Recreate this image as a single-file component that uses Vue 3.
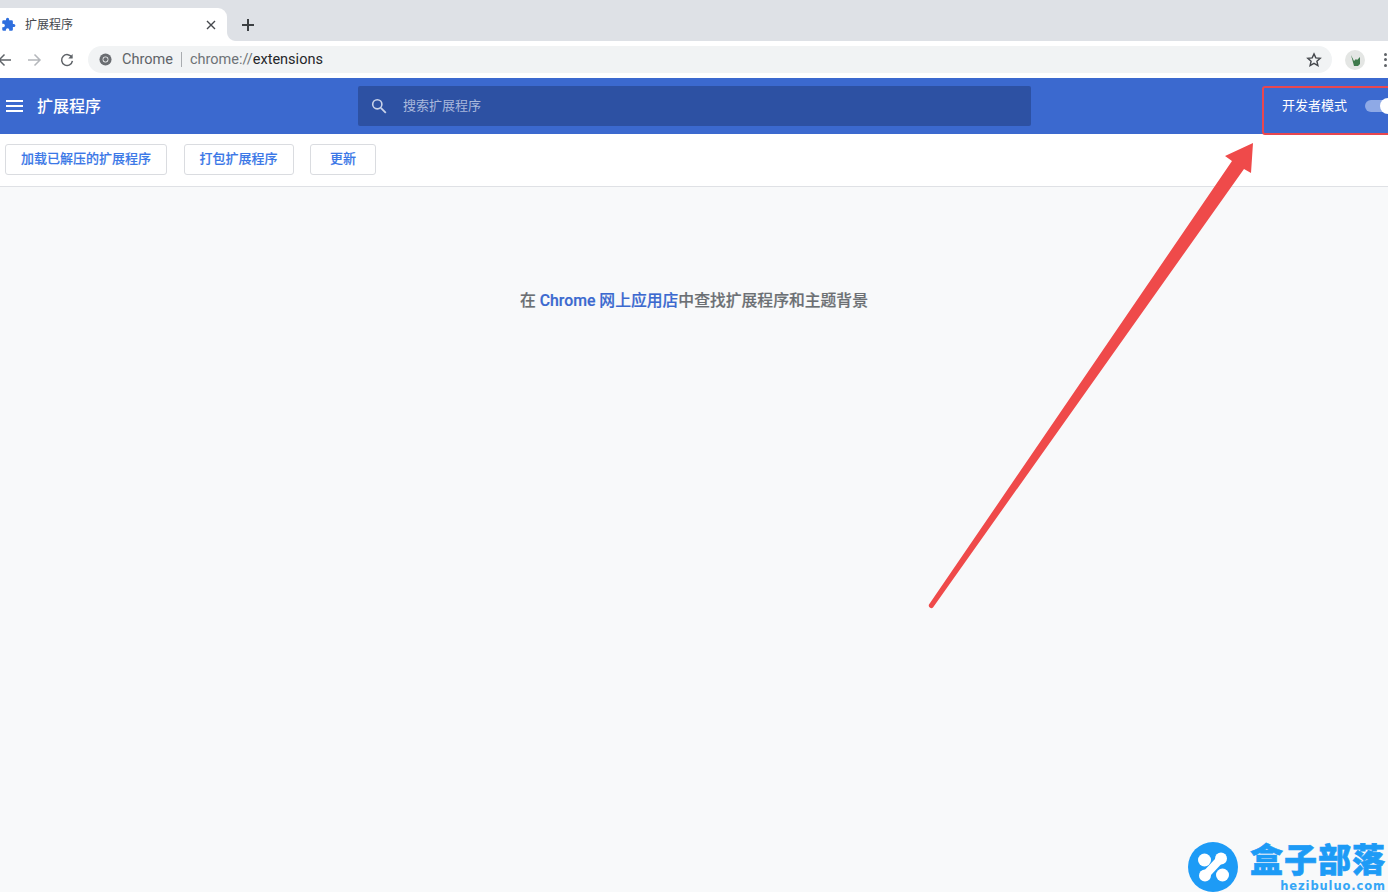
<script setup>
const actions = ['加载已解压的扩展程序', '打包扩展程序', '更新']
</script>

<template>
  <div class="page">
    <div class="tabstrip">
      <div class="tab">
        <svg class="tab__icon" viewBox="0 0 24 24" width="15" height="15">
          <path fill="#2f6fde" d="M20.500 11H19V7a2 2 0 0 0-2-2h-4V3.500a2.500 2.500 0 0 0-5 0V5H4a2 2 0 0 0-2 2v3.800h1.500a2.700 2.700 0 0 1 0 5.400H2V20a2 2 0 0 0 2 2h3.800v-1.500a2.700 2.700 0 0 1 5.400 0V22H17a2 2 0 0 0 2-2v-4h1.500a2.500 2.500 0 0 0 0-5z" />
        </svg>
        <span class="tab__title">扩展程序</span>
        <svg class="tab__close" viewBox="0 0 10 10" width="10" height="10">
          <path d="M1 1l8 8M9 1l-8 8" stroke="#45484d" stroke-width="1.400" fill="none" />
        </svg>
      </div>
      <svg class="tabstrip__new" viewBox="0 0 12 12" width="12" height="12">
        <path d="M6 0v12M0 6h12" stroke="#3c4043" stroke-width="2" fill="none" />
      </svg>
    </div>

    <div class="toolbar">
      <svg class="nav nav--back" viewBox="0 0 14 14" width="14" height="14">
        <path d="M14 7H2M7.500 1.500L2 7l5.500 5.500" stroke="#5f6368" stroke-width="1.500" fill="none" />
      </svg>
      <svg class="nav nav--forward" viewBox="0 0 14 14" width="14" height="14">
        <path d="M0 7h12M6.500 1.500L12 7l-5.500 5.500" stroke="#b4b7bb" stroke-width="1.500" fill="none" />
      </svg>
      <svg class="nav nav--reload" viewBox="0 0 16 16" width="14" height="14">
        <path d="M13.600 5.200A6.200 6.200 0 1 0 14.200 9" stroke="#5f6368" stroke-width="1.700" fill="none" />
        <path d="M14.400 1.200v5h-5z" fill="#5f6368" />
      </svg>
      <div class="omnibox">
        <svg class="omnibox__chrome" viewBox="0 0 14 14" width="13" height="13">
          <circle cx="7" cy="7" r="6.500" fill="#6a6d71" />
          <circle cx="7" cy="7" r="3.100" fill="#f1f3f4" />
          <circle cx="7" cy="7" r="2.300" fill="#6a6d71" />
        </svg>
        <span class="omnibox__chip">Chrome</span>
        <span class="omnibox__sep"></span>
        <span class="omnibox__url">chrome://<b>extensions</b></span>
        <svg class="omnibox__star" viewBox="0 0 16 16" width="16" height="16">
          <path d="M8 1.900l1.800 4 4.400.4-3.300 2.900 1 4.300L8 11.300l-3.900 2.200 1-4.300-3.300-2.900 4.400-.4z" stroke="#45484d" stroke-width="1.400" fill="none" />
        </svg>
      </div>
      <div class="avatar">
        <svg viewBox="0 0 20 20" width="20" height="20">
          <circle cx="10" cy="10" r="10" fill="#e4e6e4" />
          <path d="M6 5l3 6 2-2 1 1 3-3v7l-2 2H9z" fill="#3f7a4c" />
        </svg>
      </div>
      <div class="dots"><i></i><i></i><i></i></div>
    </div>

    <header class="header">
      <div class="header__left">
        <div class="burger"><i></i><i></i><i></i></div>
        <span class="header__title">扩展程序</span>
      </div>
      <div class="search">
        <svg viewBox="0 0 16 16" width="16" height="16">
          <circle cx="6.300" cy="6.300" r="4.600" stroke="#c9d3ea" stroke-width="1.600" fill="none" />
          <path d="M9.800 9.800l5 5" stroke="#c9d3ea" stroke-width="1.800" fill="none" />
        </svg>
        <span class="search__text">搜索扩展程序</span>
      </div>
      <div class="devmode">
        <span class="devmode__label">开发者模式</span>
        <div class="toggle"><i></i></div>
      </div>
    </header>

    <div class="actions">
      <button v-for="label in actions" :key="label" class="action">{{ label }}</button>
    </div>

    <main class="empty">
      <p>在 <a>Chrome 网上应用店</a>中查找扩展程序和主题背景</p>
    </main>

    <!-- annotation drawn over the screenshot -->
    <div class="redbox"></div>
    <svg class="arrow" viewBox="0 0 1388 892" width="1388" height="892">
      <path d="M929 604.600L1232 161 1225 156 1253 143 1251 173 1244 169 933 607.400a2.500 2.500 0 0 1-4-2.800z" fill="#ef4a4a" />
    </svg>

    <div class="brand">
      <svg viewBox="0 0 50 50" width="50" height="50">
        <circle cx="25" cy="25" r="25" fill="#1d9bf6" />
        <circle cx="16.500" cy="18" r="6.500" fill="#fff" />
        <circle cx="34.500" cy="33" r="6.500" fill="#fff" />
        <circle cx="33" cy="16.500" r="6" fill="#fff" />
        <circle cx="17" cy="33.500" r="6" fill="#fff" />
        <path d="M33 16.500L17 33.500" stroke="#fff" stroke-width="8" fill="none" />
      </svg>
      <div class="brand__text">
        <span class="brand__name">盒子部落</span>
        <span class="brand__url">hezibuluo.com</span>
      </div>
    </div>
  </div>
</template>

<style scoped>
.page {
  position: relative;
  width: 1388px;
  height: 892px;
  overflow: hidden;
  display: flex;
  flex-direction: column;
  background: #f8f9fa;
  font-family: Roboto, "Noto Sans CJK SC", sans-serif;
}

.tabstrip {
  height: 41px;
  background: #dee1e6;
  display: flex;
  align-items: flex-end;
  flex-shrink: 0;
}

.tab {
  position: relative;
  width: 227px;
  height: 33px;
  background: #fff;
  border-radius: 0 9px 0 0;
  display: flex;
  align-items: center;
  padding-left: 1px;
  box-sizing: border-box;
}

.tab::after {
  content: "";
  position: absolute;
  right: -9px;
  bottom: 0;
  width: 9px;
  height: 9px;
  background: radial-gradient(circle at 100% 0, #dee1e6 8.500px, #fff 9.500px);
}

.tab__icon {
  margin-right: 9px;
}

.tab__title {
  font-size: 12px;
  color: #45484d;
  flex: 1;
  padding-bottom: 2px;
}

.tab__close {
  margin-right: 11px;
}

.tabstrip__new {
  margin: 0 0 10px 15px;
}

.toolbar {
  height: 37px;
  background: #fff;
  display: flex;
  align-items: center;
  flex-shrink: 0;
}

.nav {
  flex-shrink: 0;
}

.nav--back {
  margin-left: -3px;
}

.nav--forward {
  margin-left: 17px;
}

.nav--reload {
  margin-left: 18px;
}

.omnibox {
  width: 1244px;
  height: 27px;
  margin-left: 14px;
  background: #f1f3f4;
  border-radius: 14px;
  display: flex;
  align-items: center;
  padding: 0 10px 0 11px;
  box-sizing: border-box;
  font-size: 14.500px;
  flex-shrink: 0;
}

.omnibox__chip {
  margin-left: 10px;
  color: #5f6368;
}

.omnibox__sep {
  width: 1px;
  height: 15px;
  margin: 0 8px;
  background: #a9acb0;
}

.omnibox__url {
  color: #6f7377;
  flex: 1;
}

.omnibox__url b {
  font-weight: 400;
  color: #25272a;
}

.avatar {
  margin-left: 13px;
  height: 20px;
  flex-shrink: 0;
}

.dots {
  margin-left: 19px;
  display: flex;
  flex-direction: column;
  gap: 2.500px;
  flex-shrink: 0;
}

.dots i {
  width: 3px;
  height: 3px;
  border-radius: 50%;
  background: #5f6368;
}

.header {
  height: 56px;
  background: #3b69cf;
  display: grid;
  grid-template-columns: 358px 673px 1fr;
  align-items: center;
  color: #fff;
  flex-shrink: 0;
}

.header__left {
  display: flex;
  align-items: center;
  padding-left: 6px;
  gap: 14px;
}

.burger {
  width: 17px;
  display: flex;
  flex-direction: column;
  gap: 3px;
}

.burger i {
  height: 2px;
  background: #fff;
}

.header__title {
  font-size: 16px;
  font-weight: 500;
  padding-bottom: 2px;
}

.search {
  height: 40px;
  background: #2d51a3;
  border-radius: 2px;
  display: flex;
  align-items: center;
  gap: 16px;
  padding-left: 13px;
  font-size: 13px;
  color: #a9b8dc;
}

.search__text {
  padding-bottom: 4px;
}

.devmode {
  display: flex;
  align-items: center;
  font-size: 13px;
  padding-left: 251px;
  white-space: nowrap;
}

.devmode__label {
  padding-bottom: 4px;
}

.toggle {
  position: relative;
  width: 34px;
  height: 12px;
  margin-left: 18px;
  border-radius: 6px;
  background: #8ea9e6;
  flex-shrink: 0;
}

.toggle i {
  position: absolute;
  left: 15px;
  top: -2px;
  width: 16px;
  height: 16px;
  border-radius: 50%;
  background: #fff;
}

.actions {
  height: 53px;
  background: #fff;
  border-bottom: 1px solid #dfe1e5;
  display: flex;
  align-items: center;
  gap: 16.500px;
  padding: 0 0 1px 5px;
  flex-shrink: 0;
  box-sizing: border-box;
}

.action {
  height: 31px;
  min-width: 66px;
  padding: 0 15px 4px;
  background: #fff;
  border: 1px solid #dadce0;
  border-radius: 3px;
  color: #3b78e7;
  font: 500 13px Roboto, "Noto Sans CJK SC", sans-serif;
  -webkit-text-stroke: 0.15px #3b78e7;
}

.empty {
  flex: 1;
  text-align: center;
  font-size: 15.800px;
  font-weight: 500;
  color: #6b6f73;
  -webkit-text-stroke: 0.2px;
}

.empty p {
  margin: 102px 0 0;
  line-height: 24px;
}

.empty a {
  color: #3b69cf;
}

.redbox {
  position: absolute;
  left: 1262px;
  top: 86px;
  width: 140px;
  height: 49px;
  border: 2.500px solid #e8474f;
  border-radius: 3px;
  box-sizing: border-box;
}

.arrow {
  position: absolute;
  left: 0;
  top: 0;
  pointer-events: none;
}

.brand {
  position: absolute;
  left: 1188px;
  top: 842px;
  display: flex;
  gap: 10px;
}

.brand__text {
  display: flex;
  flex-direction: column;
  align-items: flex-end;
  width: 138px;
  color: #1d9bf6;
}

.brand__name {
  font-size: 33px;
  font-weight: 900;
  line-height: 38px;
  letter-spacing: 1px;
  white-space: nowrap;
  -webkit-text-stroke: 0.6px #1d9bf6;
}

.brand__url {
  font: 700 11.500px/12px "DejaVu Sans", sans-serif;
  letter-spacing: 0.9px;
  color: #35a6f6;
}
</style>

<style>
html,
body {
  margin: 0;
  overflow: hidden;
}
</style>
